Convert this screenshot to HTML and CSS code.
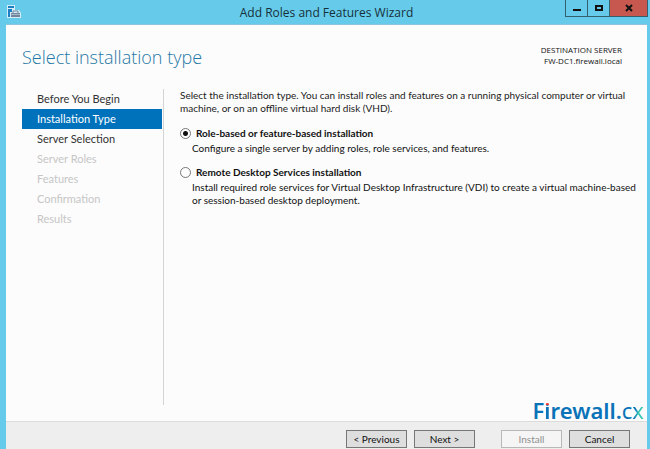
FILE: index.html
```html
<!DOCTYPE html>
<html lang="en">
<head>
<meta charset="utf-8">
<title>Add Roles and Features Wizard</title>
<link rel="stylesheet" href="styles.css">
</head>
<body>
<div class="window">
  <header class="titlebar">
    <svg class="app-icon" viewBox="0 0 14 14" aria-hidden="true">
      <path d="M0 0h8v5h4l2 3v5H0z" fill="#d4edf8"/>
      <path d="M1 1h6v2H1zM1 4h4v3H3v5H1z" fill="#1c7fc4"/>
      <path d="M4 8h9v4H4z" fill="#71869c"/>
      <path d="M6 8V6h5v2" fill="none" stroke="#71869c"/>
      <path d="M4 9h9v1H4z" fill="#a9bac8"/>
    </svg>
    <h1 class="caption">Add Roles and Features Wizard</h1>
    <div class="window-buttons">
      <button class="win-btn" type="button" aria-label="Minimize"><svg viewBox="0 0 10 10"><path d="M1 6h8v2H1z" fill="#111"/></svg></button>
      <button class="win-btn" type="button" aria-label="Maximize"><svg viewBox="0 0 10 10"><path d="M2 3h6v4H2z" fill="none" stroke="#111" stroke-width="2"/></svg></button>
      <button class="win-btn close" type="button" aria-label="Close"><svg viewBox="0 0 10 10"><path d="M2 2l6 6M8 2L2 8" stroke="#111" stroke-width="2"/></svg></button>
    </div>
  </header>
  <main class="page">
    <div class="heading">
      <h2>Select installation type</h2>
      <div class="server">
        <p>DESTINATION SERVER</p>
        <p>FW-DC1.firewall.local</p>
      </div>
    </div>
    <div class="body">
      <nav class="steps">
        <a href="#before">Before You Begin</a>
        <a href="#type" class="current" aria-current="step">Installation Type</a>
        <a href="#server">Server Selection</a>
        <a class="off">Server Roles</a>
        <a class="off">Features</a>
        <a class="off">Confirmation</a>
        <a class="off">Results</a>
      </nav>
      <section class="content">
        <p class="intro">Select the installation type. You can install roles and features on a running physical computer or virtual machine, or on an offline virtual hard disk (VHD).</p>
        <div class="option">
          <input type="radio" name="type" id="role" checked>
          <label for="role">Role-based or feature-based installation</label>
          <p>Configure a single server by adding roles, role services, and features.</p>
        </div>
        <div class="option">
          <input type="radio" name="type" id="rds">
          <label for="rds">Remote Desktop Services installation</label>
          <p>Install required role services for Virtual Desktop Infrastructure (VDI) to create a virtual machine-based or session-based desktop deployment.</p>
        </div>
      </section>
    </div>
    <div class="brand">F<span class="flame">i</span>rewall.<span class="thin">c</span><span class="thin x">x</span></div>
  </main>
  <footer class="actions">
    <button type="button">&lt; Previous</button>
    <button type="button">Next &gt;</button>
    <button type="button" class="install" disabled>Install</button>
    <button type="button">Cancel</button>
  </footer>
</div>
</body>
</html>
```
FILE: styles.css
```css
* { box-sizing: border-box; }
body, h1, h2, p { margin: 0; }
body {
  font-family: Lato, "Noto Sans", sans-serif;
  font-size: 10px;
  line-height: 13px;
  color: #111;
}
.window {
  display: flex;
  flex-direction: column;
  height: 100vh;
  padding: 0 3px 0 6px;
  background: #66cbea;
}
.titlebar {
  position: relative;
  display: flex;
  align-items: flex-start;
  justify-content: center;
  height: 25px;
  flex: none;
  border-bottom: 1px solid #8fc4dc;
}
.app-icon { position: absolute; left: 1px; top: 5px; width: 14px; height: 14px; }
.caption { font-family: "Open Sans", sans-serif; font-size: 12px; font-weight: 400; line-height: 25px; color: #16303a; }
.window-buttons {
  position: absolute;
  right: -1px;
  top: 0;
  display: flex;
  height: 17px;
  border: 1px solid #345f6e;
  border-top: 0;
}
.win-btn {
  display: grid;
  place-items: center;
  width: 22px;
  padding: 0;
  border: 0;
  border-right: 1px solid #345f6e;
  background: none;
}
.win-btn svg { width: 10px; height: 10px; }
.win-btn.close { width: 37px; border-right: 0; background: #c75850; }
.page {
  position: relative;
  display: flex;
  flex-direction: column;
  flex: 1;
  min-height: 0;
  padding-bottom: 16px;
  background: #fcfcfc;
}
.heading {
  display: flex;
  justify-content: space-between;
  align-items: flex-start;
  padding: 18px 25px 0 16px;
  height: 64px;
}
h2 { font-family: "Open Sans", sans-serif; font-size: 18px; font-weight: 300; line-height: 28px; color: #1f78a4; }
.server { font-family: "Open Sans", sans-serif; font-size: 8px; line-height: 11px; text-align: right; padding-top: 1px; }
.body { display: flex; flex: 1; min-height: 0; }
.steps {
  display: flex;
  flex-direction: column;
  width: 142px;
  margin-left: 16px;
  padding: 0 1px 0 0;
  border-right: 1px solid #d4d4d4;
  flex: none;
}
.steps a {
  padding: 3px 0 4px 15px;
  font-size: 11px;
  color: #333;
  text-decoration: none;
}
.steps .current { background: #0072bc; color: #fff; }
.steps .off { color: #c6c6c6; }
.content { flex: 1; padding: 0 8px 0 16px; }
.intro { margin-bottom: 12px; color: #222; }
.option {
  display: grid;
  grid-template-columns: 12px 1fr;
  column-gap: 4px;
  align-items: center;
  margin-bottom: 11px;
}
.option input {
  appearance: none;
  width: 11px;
  height: 11px;
  margin: 0;
  border: 1px solid #777;
  border-radius: 50%;
  background: #fff;
}
.option input:checked { background: radial-gradient(circle, #111 0 2px, #fff 3px); }
.option label { font-weight: 700; color: #111; }
.option p { grid-column: 1 / -1; margin: 2px 0 0 12px; }
.brand {
  position: absolute;
  right: 3px;
  bottom: -1px;
  font-family: "Noto Sans", sans-serif;
  font-size: 22px;
  font-weight: 600;
  line-height: 24px;
  color: #0b74b8;
}
.flame {
  background: linear-gradient(#f0302c 0 10px, #0b74b8 10px);
  background-clip: text;
  color: transparent;
}
.thin { font-weight: 400; }
.x {
  background: linear-gradient(100deg, #0b74b8 35%, #38c5b4 55%);
  background-clip: text;
  color: transparent;
}
.actions {
  display: flex;
  justify-content: flex-end;
  gap: 7px;
  flex: none;
  height: 28px;
  padding: 8px 17px 0 0;
  border-top: 1px solid #dcdcdc;
  background: #eee;
}
.actions button {
  width: 61px;
  height: 18px;
  padding: 0;
  border: 1px solid #777;
  background: #dedede;
  font: inherit;
  line-height: 16px;
  color: #111;
}
.actions .install { margin-left: 19px; border-color: #b8b8b8; background: #f5f5f5; color: #909090; }
```
